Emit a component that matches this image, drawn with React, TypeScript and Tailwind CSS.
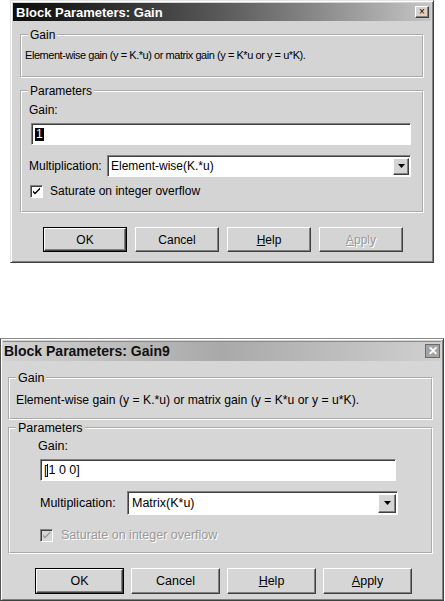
import React from 'react';

const raised =
  'border border-t-white border-l-white border-r-[#404040] border-b-[#404040] shadow-[inset_-1px_-1px_0_#808080]';
const sunken =
  'border border-t-[#808080] border-l-[#808080] border-r-white border-b-white shadow-[inset_1px_1px_0_#404040]';
const etched = 'border-2 [border-style:groove] border-white';

const DropArrow = () => (
  <svg width="7" height="4" viewBox="0 0 7 4">
    <path d="M0 0h7L3.5 4z" fill="#000" />
  </svg>
);

const Check = ({ color }: { color: string }) => (
  <svg width="9" height="9" viewBox="0 0 9 9">
    <path d="M1 3.5l2 2L8 0.5v2L3 7.5 1 5.5z" fill={color} />
  </svg>
);

const Btn = ({
  children,
  w,
  h,
  isDefault,
  disabled,
}: {
  children: React.ReactNode;
  w: string;
  h: string;
  isDefault?: boolean;
  disabled?: boolean;
}) => (
  <div className={`${w} ${h} ${isDefault ? 'border border-black' : ''} flex`}>
    <div
      className={`flex-1 ${raised} flex items-center justify-center ${
        disabled ? 'text-[#9a9a9a] [text-shadow:1px_1px_0_#fff]' : 'text-black'
      }`}
    >
      {children}
    </div>
  </div>
);

function TopDialog() {
  return (
    <div className="ml-[10px] w-[424px] h-[263px] bg-[#d4d4d4] border border-t-[#e4e4e4] border-l-[#e4e4e4] border-r-[#404040] border-b-[#404040] shadow-[inset_1px_1px_0_#fff,inset_-1px_-1px_0_#808080] p-[2px] text-[12px] text-black">
      <div className="h-[18px] bg-linear-to-r from-[#0c0c0c] via-[#5a5a5a] to-[#c6c6c6] flex items-center justify-between pl-[3px] pr-[2px]">
        <span className="text-[13px] font-bold text-white leading-none">Block Parameters: Gain</span>
        <div className={`w-[14px] h-[12px] bg-[#d4d4d4] ${raised} flex items-center justify-center text-[10px] leading-none`}>
          ×
        </div>
      </div>

      <fieldset className={`mt-[8px] ml-[7px] w-[404px] h-[49px] ${etched}`}>
        <legend className="ml-[6px] px-[2px] leading-[12px]">Gain</legend>
        <div className="pt-[7px] pl-[3px] leading-[14px] text-[11px] tracking-[-0.45px]">
          Element-wise gain (y = K.*u) or matrix gain (y = K*u or y = u*K).
        </div>
      </fieldset>

      <fieldset className={`mt-[7px] ml-[7px] w-[404px] h-[128px] ${etched}`}>
        <legend className="ml-[6px] px-[2px] leading-[12px]">Parameters</legend>
        <div className="mt-[6px] pl-[7px] leading-[14px]">Gain:</div>
        <div className={`mt-[6px] ml-[9px] w-[380px] h-[22px] bg-white ${sunken} flex items-center pl-[3px]`}>
          <span className="bg-black text-white leading-[13px] px-[1px]">1</span>
        </div>
        <div className="mt-[10px] pl-[7px] flex items-center">
          <span className="w-[78px] leading-[14px]">Multiplication:</span>
          <div className={`w-[304px] h-[22px] bg-white ${sunken} flex items-center justify-between pl-[3px] pr-[1px]`}>
            <span>Element-wise(K.*u)</span>
            <div className={`w-[16px] h-[17px] bg-[#d4d4d4] ${raised} flex items-center justify-center`}>
              <DropArrow />
            </div>
          </div>
        </div>
        <div className="mt-[7px] pl-[8px] flex items-center gap-[7px]">
          <div className={`w-[13px] h-[13px] bg-white ${sunken} flex items-center justify-center`}>
            <Check color="#000" />
          </div>
          <span className="leading-[14px]">Saturate on integer overflow</span>
        </div>
      </fieldset>

      <div className="mt-[14px] pl-[30px] flex gap-[8px]">
        <Btn w="w-[84px]" h="h-[25px]" isDefault>OK</Btn>
        <Btn w="w-[84px]" h="h-[25px]">Cancel</Btn>
        <Btn w="w-[84px]" h="h-[25px]">
          <span><span className="underline">H</span>elp</span>
        </Btn>
        <Btn w="w-[84px]" h="h-[25px]" disabled>
          <span><span className="underline">A</span>pply</span>
        </Btn>
      </div>
    </div>
  );
}

function BottomDialog() {
  return (
    <div className="mt-[75px] w-[444px] h-[263px] bg-[#d6d6d6] border border-t-[#888] border-l-[#555] border-r-[#404040] border-b-[#404040] shadow-[inset_1px_1px_0_#fff,inset_-1px_-1px_0_#808080] p-[2px] text-[12.5px] text-black">
      <div className="h-[20px] bg-linear-to-r from-[#d2d2d2] via-[#a9a9a9] to-[#d0d0d0] shadow-[inset_0_1px_0_#8a8a8a] flex items-center justify-between pl-[1px] pr-[1px]">
        <span className="text-[14px] font-bold text-[#111] leading-none">Block Parameters: Gain9</span>
        <div className="w-[15px] h-[14px] bg-[#a4a4a4] border border-[#6a6a6a] flex items-center justify-center text-white font-bold text-[12px] leading-none">
          ✕
        </div>
      </div>

      <fieldset className={`mt-[10px] ml-[5px] w-[425px] h-[49px] ${etched}`}>
        <legend className="ml-[6px] px-[2px] leading-[14px]">Gain</legend>
        <div className="pt-[8px] pl-[6px] leading-[15px] text-[12.2px]">
          Element-wise gain (y = K.*u) or matrix gain (y = K*u or y = u*K).
        </div>
      </fieldset>

      <fieldset className={`mt-[1px] ml-[5px] w-[425px] h-[133px] ${etched}`}>
        <legend className="ml-[6px] px-[2px] leading-[14px]">Parameters</legend>
        <div className="mt-[4px] pl-[28px] leading-[14px]">Gain:</div>
        <div className={`mt-[6px] ml-[30px] w-[356px] h-[22px] bg-white ${sunken} flex items-center pl-[3px]`}>
          <span className="leading-[14px]">[</span>
          <span className="w-[1px] h-[13px] bg-black" />
          <span className="leading-[14px]">1 0 0]</span>
        </div>
        <div className="mt-[10px] pl-[30px] flex items-center">
          <span className="w-[87px] leading-[14px]">Multiplication:</span>
          <div className={`w-[271px] h-[24px] bg-white ${sunken} flex items-center justify-between pl-[4px] pr-[1px]`}>
            <span>Matrix(K*u)</span>
            <div className={`w-[18px] h-[19px] bg-[#d6d6d6] ${raised} flex items-center justify-center`}>
              <DropArrow />
            </div>
          </div>
        </div>
        <div className="mt-[13px] pl-[30px] flex items-center gap-[8px]">
          <div className={`w-[13px] h-[13px] bg-[#d6d6d6] ${sunken} flex items-center justify-center`}>
            <Check color="#9a9a9a" />
          </div>
          <span className="leading-[14px] text-[#9a9a9a] [text-shadow:1px_1px_0_#fff]">Saturate on integer overflow</span>
        </div>
      </fieldset>

      <div className="mt-[14px] pl-[32px] flex gap-[7px]">
        <Btn w="w-[89px]" h="h-[26px]" isDefault>OK</Btn>
        <Btn w="w-[89px]" h="h-[26px]">Cancel</Btn>
        <Btn w="w-[89px]" h="h-[26px]">
          <span><span className="underline">H</span>elp</span>
        </Btn>
        <Btn w="w-[89px]" h="h-[26px]">
          <span><span className="underline">A</span>pply</span>
        </Btn>
      </div>
    </div>
  );
}

export default function App() {
  return (
    <div className="w-[445px] h-[601px] bg-white overflow-hidden font-['Liberation_Sans',Arial,sans-serif]">
      <TopDialog />
      <BottomDialog />
    </div>
  );
}
